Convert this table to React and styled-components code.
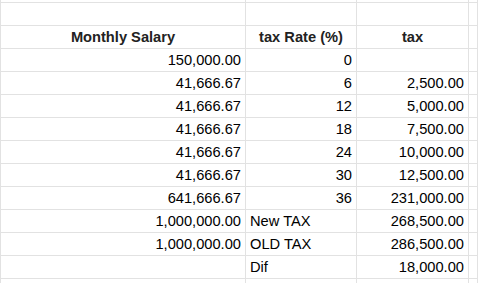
import React from "react";
import styled, { createGlobalStyle } from "styled-components";

const Global = createGlobalStyle`
  html, body { margin: 0; padding: 0; background: #fff; }
  body { font-family: "Liberation Sans", Arial, sans-serif; overflow: hidden; }
`;

const Sheet = styled.div`
  width: 478px;
  height: 283px;
  overflow: hidden;
  border-left: 1px solid #e2e2e2;
  box-sizing: border-box;
  display: flex;
  flex-direction: column;
`;

const Row = styled.div`
  display: flex;
  flex: none;
  height: ${(p) => (p.$partial ? "3px" : "23px")};
  box-sizing: border-box;
`;

const widths = ["245px", "111px", "112px"];

const Cell = styled.div`
  flex: ${(p) => (p.$col === 3 ? "1 1 auto" : "none")};
  width: ${(p) => (p.$col === 3 ? "auto" : widths[p.$col])};
  box-sizing: border-box;
  border-right: 1px solid #e2e2e2;
  border-bottom: 1px solid #e2e2e2;
  padding: 1px 4px 0 4px;
  font-size: 14.67px;
  line-height: 21px;
  color: ${(p) => (p.$bold ? "#222" : "#000")};
  font-weight: ${(p) => (p.$bold ? 700 : 400)};
  text-align: ${(p) => p.$align || "right"};
  white-space: nowrap;
  overflow: hidden;
`;

const rows = [
  ["", "", ""],
  [
    { t: "Monthly Salary", a: "center", b: true },
    { t: "tax Rate (%)", a: "center", b: true },
    { t: "tax", a: "center", b: true },
  ],
  ["150,000.00", "0", ""],
  ["41,666.67", "6", "2,500.00"],
  ["41,666.67", "12", "5,000.00"],
  ["41,666.67", "18", "7,500.00"],
  ["41,666.67", "24", "10,000.00"],
  ["41,666.67", "30", "12,500.00"],
  ["641,666.67", "36", "231,000.00"],
  ["1,000,000.00", { t: "New TAX", a: "left" }, "268,500.00"],
  ["1,000,000.00", { t: "OLD TAX", a: "left" }, "286,500.00"],
  ["", { t: "Dif", a: "left" }, "18,000.00"],
  ["", "", ""],
];

export default function App() {
  return (
    <>
      <Global />
      <Sheet>
        <Row $partial>
          {[0, 1, 2, 3].map((c) => (
            <Cell key={c} $col={c} />
          ))}
        </Row>
        {rows.map((r, i) => (
          <Row key={i}>
            {[...r, ""].map((v, c) => {
              const o = typeof v === "string" ? { t: v } : v;
              return (
                <Cell key={c} $col={c} $align={o.a} $bold={o.b}>
                  {o.t}
                </Cell>
              );
            })}
          </Row>
        ))}
      </Sheet>
    </>
  );
}
